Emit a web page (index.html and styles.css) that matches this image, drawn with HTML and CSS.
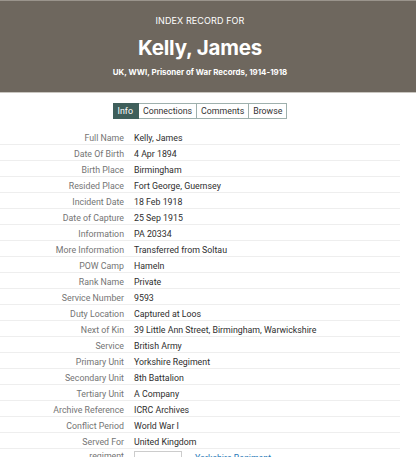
FILE: index.html
```html
<!DOCTYPE html>
<html>
<head>
<meta charset="utf-8">
<link rel="stylesheet" href="styles.css">
</head>
<body>
<header class="hero">
  <div class="kicker">INDEX RECORD FOR</div>
  <h1 class="name">Kelly, James</h1>
  <div class="collection">UK, WWI, Prisoner of War Records, 1914-1918</div>
</header>
<nav class="tabs">
  <span class="tab active">Info</span><span class="tab">Connections</span><span class="tab">Comments</span><span class="tab">Browse</span>
</nav>
<div class="facts">
  <div class="row"><span class="label">Full Name</span><span class="value">Kelly, James</span></div>
  <div class="row"><span class="label">Date Of Birth</span><span class="value">4 Apr 1894</span></div>
  <div class="row"><span class="label">Birth Place</span><span class="value">Birmingham</span></div>
  <div class="row"><span class="label">Resided Place</span><span class="value">Fort George, Guernsey</span></div>
  <div class="row"><span class="label">Incident Date</span><span class="value">18 Feb 1918</span></div>
  <div class="row"><span class="label">Date of Capture</span><span class="value">25 Sep 1915</span></div>
  <div class="row"><span class="label">Information</span><span class="value">PA 20334</span></div>
  <div class="row"><span class="label">More Information</span><span class="value">Transferred from Soltau</span></div>
  <div class="row"><span class="label">POW Camp</span><span class="value">Hameln</span></div>
  <div class="row"><span class="label">Rank Name</span><span class="value">Private</span></div>
  <div class="row"><span class="label">Service Number</span><span class="value">9593</span></div>
  <div class="row"><span class="label">Duty Location</span><span class="value">Captured at Loos</span></div>
  <div class="row"><span class="label">Next of Kin</span><span class="value">39 Little Ann Street, Birmingham, Warwickshire</span></div>
  <div class="row"><span class="label">Service</span><span class="value">British Army</span></div>
  <div class="row"><span class="label">Primary Unit</span><span class="value">Yorkshire Regiment</span></div>
  <div class="row"><span class="label">Secondary Unit</span><span class="value">8th Battalion</span></div>
  <div class="row"><span class="label">Tertiary Unit</span><span class="value">A Company</span></div>
  <div class="row"><span class="label">Archive Reference</span><span class="value">ICRC Archives</span></div>
  <div class="row"><span class="label">Conflict Period</span><span class="value">World War I</span></div>
  <div class="row"><span class="label">Served For</span><span class="value">United Kingdom</span></div>
  <div class="row last"><span class="label">regiment</span><span class="value"><span class="thumb"></span><a class="link" href="#">Yorkshire Regiment</a></span></div>
</div>
</body>
</html>
```
FILE: styles.css
```css
html, body { margin: 0; padding: 0; background: #fff; }
body { font-family: Roboto, "Noto Sans", sans-serif; width: 416px; overflow: hidden; }
.hero {
  background: #6e675e;
  border-top: 1px solid #9a948c;
  border-bottom: 1px solid #c9c6c0;
  color: #fff;
  text-align: center;
  height: 93px;
  box-sizing: border-box;
  padding: 14px 16px 0 0;
  font-family: Inter, "Noto Sans", sans-serif;
}
.kicker { font-size: 9px; line-height: 12px; letter-spacing: 0.1px; }
.name { font-size: 20.5px; line-height: 26px; font-weight: 700; margin: 8px 0 0; letter-spacing: -0.2px; }
.collection { font-size: 7.9px; line-height: 12px; font-weight: 700; margin-top: 5px; }
.tabs { display: flex; justify-content: center; padding: 10px 16px 0 0; }
.tab {
  font-size: 8.8px; line-height: 14px; color: #333;
  border: 1px solid #9eb0ad; border-left: none;
  padding: 0 4px;
}
.tab.active { background: #3f5f5b; color: #fff; border-color: #3f5f5b; padding: 0 5px; }
.facts { width: 400px; margin-top: 10px; }
.row {
  display: flex; height: 16px; align-items: center;
  border-bottom: 1px solid #eeeeee; box-sizing: border-box;
  font-size: 8.8px; padding-top: 2px;
}
.label { width: 124px; text-align: right; color: #747474; flex: none; }
.value { margin-left: 10px; color: #2e2e2e; display: flex; align-items: center; }
.row.last { height: 22px; border-bottom: none; align-items: flex-start; padding-top: 2px; }
.thumb { display: inline-block; width: 46px; height: 12px; border: 1px solid #ccc; border-bottom: none; margin-top: 0; }
.link { color: #2a7ab8; text-decoration: none; margin-left: 13px; }
```
